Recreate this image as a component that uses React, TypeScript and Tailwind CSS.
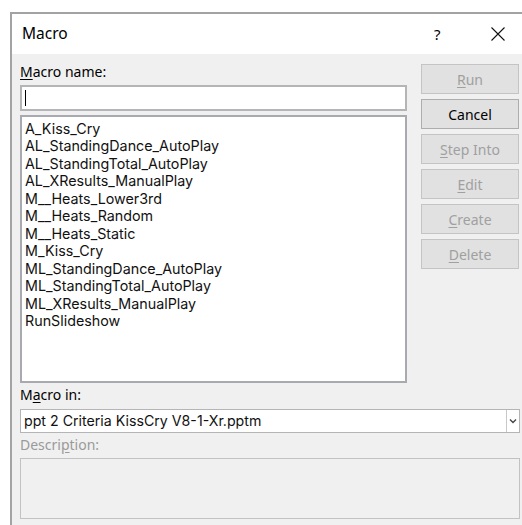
import React from "react";

const macros = [
  "A_Kiss_Cry",
  "AL_StandingDance_AutoPlay",
  "AL_StandingTotal_AutoPlay",
  "AL_XResults_ManualPlay",
  "M__Heats_Lower3rd",
  "M__Heats_Random",
  "M__Heats_Static",
  "M_Kiss_Cry",
  "ML_StandingDance_AutoPlay",
  "ML_StandingTotal_AutoPlay",
  "ML_XResults_ManualPlay",
  "RunSlideshow",
];

const font = { fontFamily: '"Noto Sans", "Open Sans", sans-serif' };
const listFont = { fontFamily: 'Inter, "Noto Sans", sans-serif' };

function Btn({
  pre = "",
  u,
  post,
  enabled = false,
}: {
  pre?: string;
  u?: string;
  post: string;
  enabled?: boolean;
}) {
  return (
    <div
      className={`flex h-[30px] items-center justify-center border bg-[#e1e1e1] text-[14px] ${
        enabled ? "border-[#adadad] text-black" : "border-[#c4c4c4] text-[#a0a0a0]"
      }`}
    >
      <span>
        {pre}
        {u && <span className="underline underline-offset-2">{u}</span>}
        {post}
      </span>
    </div>
  );
}

export default function App() {
  return (
    <div className="h-[525px] w-[522px] overflow-hidden bg-white pl-[10px] pt-[12px]" style={font}>
      <div className="h-[540px] w-[540px] border-l-2 border-t-2 border-[#a3a3a3] bg-[#f0f0f0]">
        {/* title bar */}
        <div className="flex h-[40px] items-center bg-white pl-[10px] text-black">
          <span className="w-[412px] text-[15.5px]">Macro</span>
          <span className="w-[7px] text-[15px] leading-none">?</span>
          <svg className="ml-[50px]" width="14" height="14" viewBox="0 0 14 14">
            <path d="M0.5 0.5 L13.5 13.5 M13.5 0.5 L0.5 13.5" stroke="#111" strokeWidth="1.1" fill="none" />
          </svg>
        </div>

        {/* body */}
        <div className="flex pl-[8px] pt-[8px]">
          <div className="flex w-[387px] flex-col">
            <div className="h-[20px] text-[14px] leading-[20px] text-black">
              <span className="underline underline-offset-2">M</span>acro name:
            </div>
            <div className="mt-[3px] flex h-[26px] items-center border-2 border-[#b5b5b8] bg-white pl-[3px]">
              <div className="h-[16px] w-[1px] bg-black" />
            </div>
            <div
              className="mt-[4px] h-[268px] border-2 border-[#a9aab0] bg-white pl-[3px] pt-[3px]"
              style={listFont}
            >
              {macros.map((m) => (
                <div key={m} className="text-[14.3px] leading-[17.45px] text-[#111]">
                  {m}
                </div>
              ))}
            </div>
          </div>
          <div className="ml-[14px] mt-[2px] flex w-[98px] flex-col gap-[5px]">
            <Btn u="R" post="un" />
            <Btn post="Cancel" enabled />
            <Btn u="S" post="tep Into" />
            <Btn u="E" post="dit" />
            <Btn u="C" post="reate" />
            <Btn u="D" post="elete" />
          </div>
        </div>

        <div className="pl-[8px]">
          <div className="mt-[2px] h-[20px] text-[14px] leading-[20px] text-black">
            M<span className="underline underline-offset-2">a</span>cro in:
          </div>
          <div className="mt-[4px] flex h-[24px] w-[500px] items-center border border-[#b5b5b8] bg-white">
            <span className="flex-1 pl-[3px] text-[14.2px] text-[#111]" style={listFont}>
              ppt 2 Criteria KissCry V8-1-Xr.pptm
            </span>
            <div className="flex h-full w-[13px] items-center justify-center border-l border-[#c8c8c8]">
              <svg width="8" height="6" viewBox="0 0 8 6">
                <path d="M1 1.5 L4 4.5 L7 1.5" stroke="#444" strokeWidth="1.4" fill="none" />
              </svg>
            </div>
          </div>
          <div className="mt-[2px] h-[20px] text-[14px] leading-[20px] text-[#9a9a9a]">
            Descri<span className="underline underline-offset-2">p</span>tion:
          </div>
          <div className="mt-[3px] h-[61px] w-[500px] border border-[#c2c2c2] bg-[#f0f0f0]" />
        </div>
      </div>
    </div>
  );
}
